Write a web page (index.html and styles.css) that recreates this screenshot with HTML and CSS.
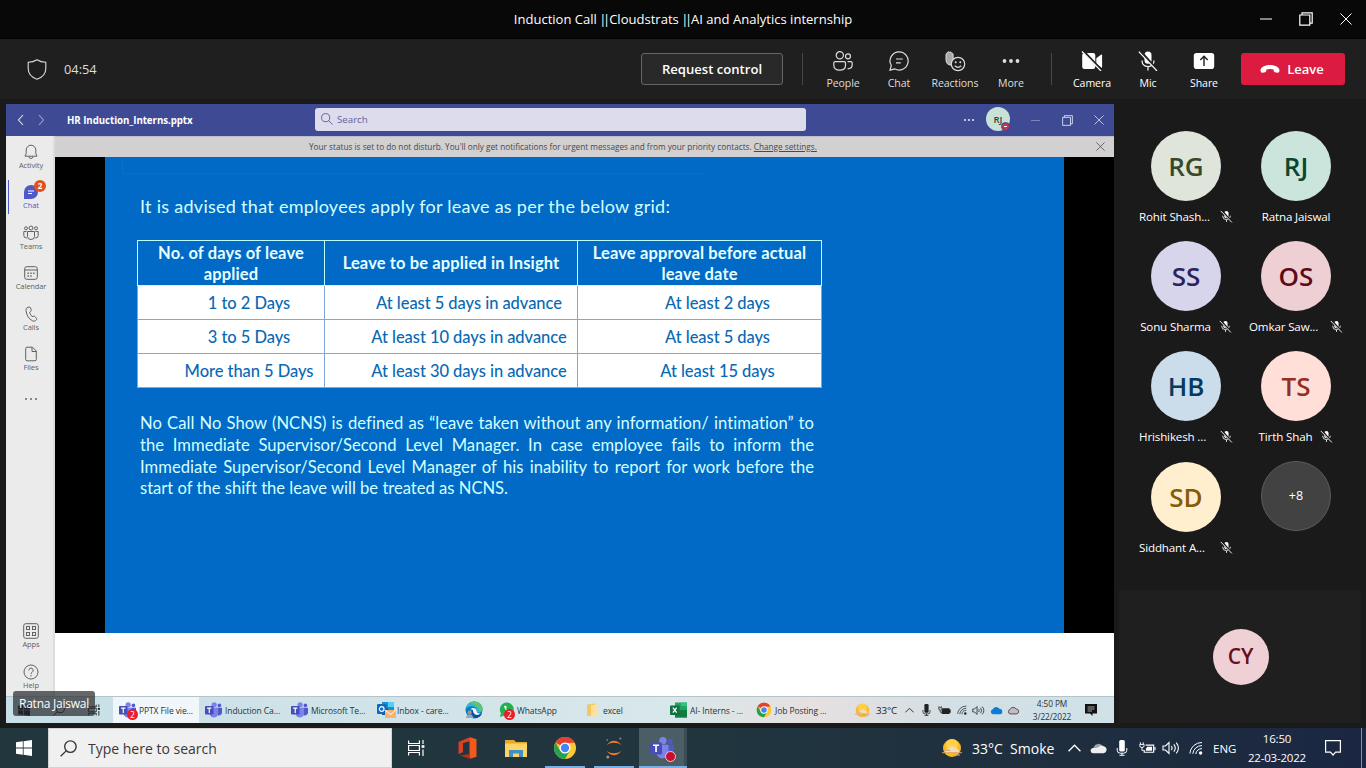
FILE: index.html
```html
<!DOCTYPE html>
<html lang="en">
<head>
<meta charset="utf-8">
<title>Induction Call ||Cloudstrats ||AI and Analytics internship</title>
<link rel="stylesheet" href="styles.css">
</head>
<body>
<svg class="defs" aria-hidden="true">
  <symbol id="muted" viewBox="0 0 14 14"><rect x="4.6" y="1" width="4.6" height="8" rx="2.3" fill="#fff"/><path d="M2.8 6.2a4.2 4.2 0 0 0 8.4 0M7 10.4v2.4" fill="none" stroke="#e8e8e8"/><path d="M1.6 0.4 13 13.4" stroke="#1a1a1a" stroke-width="2.2"/><path d="M.8 1 12.8 13.4" stroke="#fff"/></symbol>
  <symbol id="min" viewBox="0 0 12 12"><path d="M0 6h12" stroke="currentColor"/></symbol>
  <symbol id="restore" viewBox="0 0 14 14"><path d="M.8 3h10v10.2h-10zM3 3V.8h10.2v10.4h-2.4" fill="none" stroke="currentColor" stroke-width="1.2"/></symbol>
  <symbol id="close" viewBox="0 0 12 12"><path d="m.5.5 11 11m0-11-11 11" stroke="currentColor"/></symbol>
  <symbol id="teams" viewBox="0 0 26 24"><circle cx="14" cy="4" r="4" fill="#7b83eb"/><circle cx="22" cy="5" r="2.8" fill="#5059c9"/><path d="M17 8.5h9v7.2a5 5 0 0 1-7 4.2z" fill="#5059c9"/><path d="M7 8.5h13V17a6.5 6.5 0 0 1-13 0z" fill="#7b83eb"/><rect y="6" width="13" height="13" rx="1.2" fill="#464eb8"/><path d="M3.2 9h6.6M6.5 9v7.4" stroke="#fff" stroke-width="1.8"/></symbol>
  <symbol id="chrome" viewBox="0 0 48 48"><circle cx="24" cy="24" r="22" fill="#fbc934"/><path d="M24 24 5 13A22 22 0 0 1 43.1 13H24z" fill="#e34133"/><path d="M5 13A22 22 0 0 0 24 46l9.5-16.5L24 24l-9.5 5.5z" fill="#25a152"/><path d="M5 13a22 22 0 0 1 38-0L24 14z" fill="#e34133"/><circle cx="24" cy="24" r="11" fill="#fff"/><circle cx="24" cy="24" r="8.3" fill="#4285f4"/></symbol>
  <symbol id="weather" viewBox="0 0 22 20"><circle cx="11" cy="10" r="9" fill="#fbb924"/><circle cx="11" cy="7" r="6" fill="#ffd04a"/><path d="M4 14a3 3 0 0 1 3-3 4.3 4.3 0 0 1 7.8-.4A3 3 0 0 1 18 14z" fill="#f3dcb8"/><path d="M1 14.8h20M3 12.4h6M12 17h7" stroke="#d9a878" stroke-width="1.1"/></symbol>
  <symbol id="chev" viewBox="0 0 12 12"><path d="m.5 8.5 5.5-5.5 5.5 5.5" fill="none" stroke="currentColor" stroke-width="1.2"/></symbol>
  <symbol id="mic" viewBox="0 0 12 16"><rect x="3.2" y="0" width="5.6" height="11.5" rx="1.6" fill="currentColor"/><path d="M1.2 8v2.2q0 3 3 3h3.6q3 0 3-3V8M6 13v2.2M3.5 15.3h5" fill="none" stroke="currentColor"/></symbol>
  <symbol id="batt" viewBox="0 0 18 14"><path d="M7 4h8.5v7.5h-10V9" fill="none" stroke="currentColor" stroke-width="1.2"/><path d="M8.8 5.8h5v4h-6.5v-2zM16.3 6h1.2v3.5h-1.2z" fill="currentColor"/><path d="M1.5 1v2M4.5 1v2M.8 3.2h4.6v1.3q0 2-2.3 2t-2.3-2zM3.1 6.5v3h2" fill="none" stroke="currentColor"/></symbol>
  <symbol id="battfull" viewBox="0 0 18 14"><path d="M6 4h10v1.500h1.500v4.500H16v1.800H5V7q1-1 1-3z" fill="currentColor"/><path d="M1.500 1v2M4.500 1v2M.8 3.200h4.600v1.300q0 2-2.300 2t-2.300-2zM3.100 6.500v3h2" fill="none" stroke="currentColor"/></symbol>
  <symbol id="vol" viewBox="0 0 18 14"><path d="M1 5h2.5L7 1.5v11L3.5 9H1z" fill="none" stroke="currentColor" stroke-width="1.1"/><path d="M9.3 5q1.6 2 0 4M11.8 3.3q3 3.7 0 7.4M14.2 1.6q4.4 5.4 0 10.8" fill="none" stroke="currentColor" stroke-width="1.1"/></symbol>
  <symbol id="wifi" viewBox="0 0 14 14"><path d="M.8 12.5A12 12 0 0 1 13 1.5M3.8 12.8A9 9 0 0 1 13 4.6M6.8 13A6 6 0 0 1 13 7.6" fill="none" stroke="currentColor"/><circle cx="11.6" cy="12" r="1.7" fill="currentColor"/></symbol>
  <symbol id="cloud" viewBox="0 0 18 12"><path d="M4 11.3a3.6 3.6 0 0 1-.2-7A5.2 5.2 0 0 1 13 3.6a3.9 3.9 0 0 1 1 7.7z" fill="currentColor"/></symbol>
  <symbol id="win" viewBox="0 0 16 16"><path d="M0 2.3 6.8 1.3V7.6H0zM7.6 1.2 16 0v7.6H7.6zM0 8.4h6.8v6.3L0 13.7zM7.6 8.4H16V16l-8.4-1.2z" fill="currentColor"/></symbol>
  <symbol id="task" viewBox="0 0 18 16"><path d="M.6.5v3h10.8v-3M.6 15.5v-3h10.8v3M.6 5.5h10.8v5H.6zM15 0v4M15 9.5V16" fill="none" stroke="currentColor" stroke-width="1.2"/><path d="M13.6 5.2h2.8v2.6h-2.8z" fill="currentColor"/></symbol>
  <symbol id="lens" viewBox="0 0 16 16"><circle cx="9.8" cy="6.2" r="5.4" fill="none" stroke="currentColor" stroke-width="1.3"/><path d="m6 10-5.400 5.400" stroke="currentColor" stroke-width="1.300"/></symbol>
</svg>

<header class="titlebar">
  <h1>Induction Call <span class="pipes">||</span>Cloudstrats <span class="pipes">||</span>AI and Analytics internship</h1>
  <div class="wincontrols"><svg width="12" height="12"><use href="#min"/></svg><svg width="14" height="14"><use href="#restore"/></svg><svg width="12" height="12"><use href="#close"/></svg></div>
</header>

<nav class="callbar">
  <svg class="shield" width="20" height="21" viewBox="0 0 20 21"><path d="M10 .8Q13.800 3.300 18.800 3.300V9.500Q18.800 17.200 10 20.200 1.200 17.200 1.200 9.500V3.300Q6.200 3.300 10 .8Z" fill="none" stroke="#ddd" stroke-width="1.1"/></svg>
  <span class="timer">04:54</span>
  <button class="request">Request control</button>
  <i class="divider"></i>
  <div class="actions first">
    <div class="action"><svg width="20" height="20" viewBox="0 0 20 20"><g fill="none" stroke="currentColor" stroke-width="1.2"><circle cx="6.800" cy="4.300" r="3.600"/><circle cx="15" cy="5.300" r="2.500"/><path d="M2.200 10.600h8.900q1.400 0 1.400 1.400v2.300q0 4.900-5.800 4.900T.8 14.300V12q0-1.400 1.400-1.400zM14.500 10.600h3.400q1.300 0 1.300 1.400v1.800q0 4-4.600 4"/></g></svg><span>People</span></div>
    <div class="action"><svg width="20" height="20" viewBox="0 0 20 20"><path d="M10.200.8a9.100 9.100 0 1 1-4.300 17.200L1 19.200l1.300-4.700A9.100 9.100 0 0 1 10.200.8zM7 8h6.800M7 11.800h4.800" fill="none" stroke="currentColor" stroke-width="1.200"/></svg><span>Chat</span></div>
    <div class="action"><svg width="22" height="21" viewBox="0 0 22 21"><path d="M2 8V3.500q0-1.200 1.300-1.200V1.500Q4.500.2 5.600 1.200q1.600-.8 2 1 1.500-.3 1.500 1.300v5q1.300-1.500 2.600-.6L9 13.500q-3 1.500-5.500-.6Q1.800 11 2 8z" fill="#aaa" stroke="#ddd"/><circle cx="14" cy="13" r="6.700" fill="#1f1f1f" stroke="#ddd" stroke-width="1.200"/><circle cx="11.700" cy="11.300" r="1" fill="#ddd"/><circle cx="16.300" cy="11.300" r="1" fill="#ddd"/><path d="M10.800 14.800q3.200 3 6.400 0" fill="none" stroke="#ddd" stroke-width="1.200"/></svg><span>Reactions</span></div>
    <div class="action"><svg width="20" height="20" viewBox="0 0 20 20"><g fill="currentColor"><circle cx="3.500" cy="10" r="1.900"/><circle cx="10" cy="10" r="1.900"/><circle cx="16.500" cy="10" r="1.900"/></g></svg><span>More</span></div>
  </div>
  <i class="divider"></i>
  <div class="actions devices">
    <div class="action"><svg width="22" height="20" viewBox="0 0 22 20"><path d="M3.500 2H12q2.300 0 2.300 2.300v11.400Q14.300 18 12 18H3.500q-2.300 0-2.300-2.300V4.300Q1.200 2 3.500 2zM15.300 7.200 20.300 3.500q.8-.4.8.6v12q0 1-.8.5l-5-3.800z" fill="#fff"/><path d="M2.200 0 21 20" stroke="#1f1f1f" stroke-width="2.600"/><path d="M1 .5 20 20" stroke="#fff" stroke-width="1.200"/></svg><span>Camera</span></div>
    <div class="action"><svg width="20" height="20" viewBox="0 0 20 20"><rect x="6.500" y=".4" width="7" height="12.300" rx="3.500" fill="#fff"/><path d="M4 9.500q0 6 6 6t6-6M10 15.500v4" fill="none" stroke="#fff" stroke-width="1.200"/><path d="M2.200 0 20 20" stroke="#1f1f1f" stroke-width="2.600"/><path d="M.8.600 19 20" stroke="#fff" stroke-width="1.200"/></svg><span>Mic</span></div>
    <div class="action"><svg width="22" height="20" viewBox="0 0 22 20"><rect x=".8" y="2" width="20.400" height="16" rx="2.800" fill="#fff"/><path d="M11 15V5.500M7.300 9 11 5.300 14.700 9" fill="none" stroke="#1f1f1f" stroke-width="1.400"/></svg><span>Share</span></div>
  </div>
  <button class="leave"><svg width="20" height="10" viewBox="0 0 20 10"><path d="M10 1C4.500 1 .3 3.600.5 6.700q.1 2.300 2 2.100l2.600-.5Q6.300 8 6.300 6.700V5.400q3.700-1 7.400 0v1.300q0 1.300 1.200 1.600l2.600.5q1.900.2 2-2.100C19.700 3.600 15.500 1 10 1z" fill="#fff"/></svg>Leave</button>
</nav>

<main class="stage">
  <section class="shared">
    <div class="apphead">
      <svg class="nav" width="28" height="12" viewBox="0 0 28 12"><path d="M6 1 1.500 6 6 11" fill="none" stroke="#e4e4f4" stroke-width="1.100"/><path d="m22 1 4.500 5L22 11" fill="none" stroke="#9a9fd0" stroke-width="1.100"/></svg>
      <b class="filename">HR Induction_Interns.pptx</b>
      <div class="appsearch"><svg class="flip" width="12" height="12" viewBox="0 0 16 16"><use href="#lens"/></svg>Search</div>
      <span class="appdots"><i></i><i></i><i></i></span>
      <div class="me">RJ<i class="busy"></i></div>
      <svg class="w1" width="9" height="9"><use href="#min"/></svg>
      <svg class="w2" width="11" height="11"><use href="#restore"/></svg>
      <svg class="w3" width="10" height="10"><use href="#close"/></svg>
    </div>
    <div class="appbody">
      <aside class="rail">
        <div class="railitem"><svg width="14" height="16" viewBox="0 0 14 16"><path d="M1 12.200 2.200 9.500V6a4.800 4.800 0 0 1 9.600 0v3.500L13 12.200zM5 12.500q0 2 2 2t2-2" fill="none" stroke="currentColor"/></svg>Activity</div>
        <div class="railitem on"><svg width="16" height="16" viewBox="0 0 16 16"><path d="M8 1a7 7 0 0 1 0 14H1.500Q1 15 1 14.500V8a7 7 0 0 1 7-7z" fill="#5059c9"/><path d="M5 7h6M5 9.500h4" stroke="#fff"/></svg>Chat<b class="count">2</b></div>
        <div class="railitem"><svg width="16" height="15" viewBox="0 0 16 15"><g fill="none" stroke="currentColor"><circle cx="8" cy="2.500" r="2"/><circle cx="3" cy="2.800" r="1.500"/><circle cx="13" cy="2.800" r="1.500"/><path d="M4.500 6h7v5q0 3-3.500 3t-3.500-3zM3.500 6H.8v4q0 2.500 3 2.500M12.500 6h2.700v4q0 2.500-3 2.500"/></g></svg>Teams</div>
        <div class="railitem"><svg width="14" height="14" viewBox="0 0 14 14"><rect x=".7" y=".7" width="12.600" height="12.600" rx="2" fill="none" stroke="currentColor"/><path d="M.7 4h12.600" stroke="currentColor"/><path d="M3.500 7.200h8M3.500 10h5.500" stroke="currentColor" stroke-width="1.400" stroke-dasharray="1.400 1.400"/></svg>Calendar</div>
        <div class="railitem"><svg width="13" height="16" viewBox="0 0 13 16"><path d="M2 1.700 4 1q1-.2 1.400.7l.8 2q.3.900-.4 1.500L4.600 6.300q.7 2.500 2.500 4.300l1.600-.4q.8-.2 1.300.4l1.500 1.800q.5.700-.1 1.400l-1 .9q-1 .9-2.700.2Q1.800 12 1 4.500.8 2.500 2 1.700z" fill="none" stroke="currentColor"/></svg>Calls</div>
        <div class="railitem"><svg width="12" height="15" viewBox="0 0 12 15"><path d="M2 .7h5.500L11.300 4.500V13q0 1.300-1.300 1.300H2Q.7 14.300.7 13V2Q.7.7 2 .7zM7 .8V5h4.200" fill="none" stroke="currentColor"/></svg>Files</div>
        <span class="raildots"><i></i><i></i><i></i></span>
        <i class="railline"></i>
        <div class="railitem apps"><svg width="16" height="16" viewBox="0 0 16 16"><g fill="none" stroke="currentColor"><rect x=".7" y=".7" width="14.600" height="14.600" rx="2"/><rect x="3.500" y="3.500" width="3" height="3"/><rect x="9.500" y="3.500" width="3" height="3"/><rect x="3.500" y="9.500" width="3" height="3"/><rect x="9.500" y="9.500" width="3" height="3"/></g></svg>Apps</div>
        <div class="railitem"><svg width="16" height="16" viewBox="0 0 16 16"><g fill="none" stroke="currentColor"><circle cx="8" cy="8" r="7"/><path d="M5.800 6.300a2.200 2.200 0 1 1 3.500 1.800Q8 8.800 8 10M8 11v1.400"/></g></svg>Help</div>
      </aside>
      <div class="viewer">
        <div class="banner"><p>Your status is set to do not disturb. You'll only get notifications for urgent messages and from your priority contacts. <u>Change settings.</u></p><svg width="9" height="9"><use href="#close"/></svg></div>
        <div class="letterbox">
          <article class="slide">
            <div class="outline"></div>
            <p class="intro">It is advised that employees apply for leave as per the below grid:</p>
            <table>
              <colgroup><col class="c1"><col class="c2"><col class="c3"></colgroup>
              <thead><tr><th>No. of days of leave<br>applied</th><th>Leave to be applied in Insight</th><th>Leave approval before actual<br>leave date</th></tr></thead>
              <tbody>
                <tr><td>1 to 2 Days</td><td>At least 5 days in advance</td><td>At least 2 days</td></tr>
                <tr><td>3 to 5 Days</td><td>At least 10 days in advance</td><td>At least 5 days</td></tr>
                <tr><td>More than 5 Days</td><td>At least 30 days in advance</td><td>At least 15 days</td></tr>
              </tbody>
            </table>
            <div class="policy"><p>No Call No Show (NCNS) is defined as “leave taken without any information/ intimation” to</p><p>the Immediate Supervisor/Second Level Manager. In case employee fails to inform the</p><p>Immediate Supervisor/Second Level Manager of his inability to report for work before the</p><p class="last">start of the shift the leave will be treated as NCNS.</p></div>
          </article>
        </div>
        <div class="blank"></div>
      </div>
    </div>
    <div class="rbar">
      <div class="rsys"><svg width="12" height="12" viewBox="0 0 16 16"><use href="#win"/></svg><svg width="12" height="12" viewBox="0 0 16 16"><use href="#lens"/></svg><svg width="13" height="12" viewBox="0 0 18 16"><use href="#task"/></svg></div>
      <div class="rtask sel"><svg width="17" height="16"><use href="#teams"/></svg><i class="dot">2</i><span>PPTX File vie...</span></div>
      <div class="rtask"><svg width="17" height="16"><use href="#teams"/></svg><span>Induction Ca...</span></div>
      <div class="rtask"><svg width="17" height="16"><use href="#teams"/></svg><span>Microsoft Te...</span></div>
      <div class="rtask inbox"><svg width="19" height="18" viewBox="0 0 19 18"><path d="M5 1h12v13H5z" fill="#1490df"/><path d="M11 1h6v5h-6z" fill="#50d0f5"/><path d="M5 7h6v7H5z" fill="#0a5aa8"/><rect y="3" width="9.500" height="10" rx="1" fill="#0f6cbd"/><circle cx="4.700" cy="8" r="2.300" fill="none" stroke="#fff" stroke-width="1.200"/><path d="M8 9h11v8H8z" fill="#f7b56c"/><path d="m8 9 5.500 4.500L19 9" fill="none" stroke="#fff"/></svg><span>Inbox - care...</span></div>
      <div class="rtask edge"><svg width="18" height="18" viewBox="0 0 18 18"><circle cx="9" cy="9" r="8.500" fill="#0f79c8"/><path d="M.5 8.500C1.500 3.500 5 .5 9 .5c5 0 8.500 3.500 8.500 7 0 3-2.500 4.500-4.500 4-2-.4-1.500-1.700-1.500-2.500C11.500 4.500 4 3.500.5 8.500z" fill="#35b8c8"/><path d="M8 .6c6-.6 9.500 3.400 9.500 7 0 2-1.500 3.500-3 3.900C15 7 12 4 5 2z" fill="#5fc56e"/><path d="M17 12.500c-3 2.500-8.500 1-9-3.500-2 2-1.500 6.500 3 8.200 3-.5 5-2.200 6-4.700z" fill="#0b4d9a"/><path d="M11.500 10C11.500 6.500 7 6 5 8.500q2-.5 3 .8-.3 2 1.500 3.700 3 2 6-.5-3.500.300-4-2.500z" fill="#eef6fb"/><circle cx="4.500" cy="11.500" r="2" fill="#b78c80"/><path d="M1 17q0-3.500 3.500-3.500T8 17z" fill="#98a6b8"/></svg></div>
      <div class="rtask wa"><svg width="16" height="16" viewBox="0 0 16 16"><path d="M8 .5a7 7 0 1 1-3.300 13.300L.8 15l1.200-3.700A7 7 0 0 1 8 .5z" fill="#25b050"/><path d="M5 4q1 5 6 7l1.200-2-2-1-1 .8Q7.500 8 7 6.500l.8-.8-.7-1.900z" fill="#fff"/></svg><i class="dot">2</i><span>WhatsApp</span></div>
      <div class="rtask folder"><svg width="12" height="14" viewBox="0 0 12 14"><path d="M1 1.500 9 .5v12l-8 .5z" fill="#f2c866"/><path d="M5 2h6v11l-6 .8z" fill="#ffe09a"/></svg><span>excel</span></div>
      <div class="rtask xls"><svg width="17" height="16" viewBox="0 0 17 16"><path d="M5 .5h12v15H5z" fill="#21a366"/><path d="M5 8h12v7.500H5z" fill="#107c41"/><path d="M11 .5h6V4h-6z" fill="#33c481"/><rect y="3.500" width="9.500" height="9.500" rx=".8" fill="#0f703b"/><path d="m2.900 5.700 3.800 5m0-5-3.800 5" stroke="#fff" stroke-width="1.300"/></svg><span>AI- Interns - ...</span></div>
      <div class="rtask jobs"><svg width="16" height="16"><use href="#chrome"/></svg><span>Job Posting ...</span></div>
      <div class="rtray"><svg class="a" width="17" height="15"><use href="#weather"/></svg><span class="temp">33°C</span><svg class="b" width="9" height="9"><use href="#chev"/></svg><svg class="c" width="9" height="12"><use href="#mic"/></svg><svg class="d" width="13" height="11"><use href="#battfull"/></svg><svg class="e" width="10" height="10"><use href="#wifi"/></svg><svg class="f" width="13" height="11"><use href="#vol"/></svg><svg class="g" width="13" height="9"><use href="#cloud"/></svg><svg class="h" width="13" height="9" viewBox="-1 -1 20 14"><path d="M4 11.300a3.600 3.600 0 0 1-.2-7A5.200 5.200 0 0 1 13 3.600a3.900 3.900 0 0 1 1 7.700z" fill="#c8b9c2" stroke="#504b52" stroke-width="1.500"/></svg></div>
      <div class="rclock">4:50 PM<br>3/22/2022</div>
      <svg class="rnote" width="12" height="12" viewBox="0 0 12 12"><path d="M0 0h12v9.500H7.500V12L5 9.500H0z" fill="#111"/><path d="M2.500 3h7M2.500 5h7M2.500 7H7" stroke="#ccc" stroke-width=".8"/></svg>
    </div>
    <div class="presenter">Ratna Jaiswal</div>
  </section>

  <aside class="people">
    <div class="grid">
      <div class="person"><div class="face rg">RG</div><div class="name"><span class="cut">Rohit Shash...</span><svg><use href="#muted"/></svg></div></div>
      <div class="person"><div class="face rj">RJ</div><div class="name"><span>Ratna Jaiswal</span></div></div>
      <div class="person"><div class="face ss">SS</div><div class="name"><span class="full">Sonu Sharma</span><svg><use href="#muted"/></svg></div></div>
      <div class="person"><div class="face os">OS</div><div class="name"><span class="cut">Omkar Saw...</span><svg><use href="#muted"/></svg></div></div>
      <div class="person"><div class="face hb">HB</div><div class="name"><span class="cut">Hrishikesh ...</span><svg><use href="#muted"/></svg></div></div>
      <div class="person"><div class="face ts">TS</div><div class="name"><span class="full">Tirth Shah</span><svg><use href="#muted"/></svg></div></div>
      <div class="person low"><div class="face sd">SD</div><div class="name"><span class="cut">Siddhant A...</span><svg><use href="#muted"/></svg></div></div>
      <div class="person"><div class="face more">+8</div></div>
    </div>
    <div class="self"><div class="face cy">CY</div></div>
  </aside>
</main>

<footer class="taskbar">
  <div class="start"><svg width="16" height="16"><use href="#win"/></svg></div>
  <div class="search"><svg width="17" height="17" viewBox="0 0 16 16"><use href="#lens"/></svg>Type here to search</div>
  <div class="tb"><svg width="18" height="16"><use href="#task"/></svg></div>
  <div class="tb office"><svg width="19" height="22" viewBox="0 0 19 22"><path d="M12 .3 18.500 2.300v17.400L12 21.700z" fill="#f05a1c"/><path d="M12 .3v21.400L2 18.500l9-1.200V4.500L5 6v9L.7 17V5z" fill="#c22a1c"/><path d="M.7 5 12 .3V4L5 6v9L.7 17z" fill="#d94324"/></svg></div>
  <div class="tb files"><svg width="22" height="19" viewBox="0 0 22 19"><path d="M0 1h9l2 2h11v15H0z" fill="#e5a82d"/><path d="M0 4.500h22V18H0z" fill="#fdd565"/><path d="M4 18v-7h14v7h-4v-3.500H8V18z" fill="#3f8fca"/></svg></div>
  <div class="tb gc run"><svg width="24" height="24"><use href="#chrome"/></svg></div>
  <div class="tb jup run"><svg width="18" height="22" viewBox="0 0 18 22"><path d="M1.500 8Q9-.5 16.500 8 9 3.500 1.500 8zM1.500 14Q9 22.500 16.500 14 9 18.500 1.500 14z" fill="#f37726"/><circle cx="2.200" cy="3" r=".9" fill="#777"/><circle cx="15.300" cy="1.500" r="1.100" fill="#888"/><circle cx="2.800" cy="20" r="1.500" fill="#999"/></svg></div>
  <div class="tb tm run"><svg width="24" height="22"><use href="#teams"/></svg><i class="rec"></i></div>
  <div class="tray"><svg class="t1" width="22" height="20"><use href="#weather"/></svg><span class="wx">33°C&nbsp; Smoke</span><svg class="t2" width="13" height="13"><use href="#chev"/></svg><svg class="t3" width="17" height="12" viewBox="0 0 18 12"><path d="M4 9a3.600 3.600 0 0 1 0-4A5.200 5.200 0 0 1 13 3.600z" fill="#9fa4ac"/><path d="M3.500 11.500a2.800 2.800 0 0 1 0-5.600Q7 6.500 9 5q3-3 6-.5 3 1 2.500 4-.5 2.500-3 3z" fill="#eee"/></svg><svg class="t4" width="12" height="16"><use href="#mic"/></svg><svg class="t5" width="17" height="14"><use href="#batt"/></svg><svg class="t6" width="18" height="14"><use href="#vol"/></svg><svg class="t7" width="14" height="14"><use href="#wifi"/></svg><span class="lang">ENG</span></div>
  <div class="clock">16:50<br>22-03-2022</div>
  <svg class="note" width="16" height="16" viewBox="0 0 16 16"><path d="M.6.6h14.800v11.600h-4.800L8 15l-2.600-2.800H.6z" fill="none" stroke="#fff" stroke-width="1.200"/></svg>
  <i class="peek"></i>
</footer>
</body>
</html>
```
FILE: styles.css
```css
* { box-sizing: border-box; margin: 0; padding: 0; }
body { width: 1366px; height: 768px; overflow: hidden; background: #1a1a1a; color: #fff; font-family: "Open Sans", "Noto Sans", sans-serif; display: flex; flex-direction: column; }
svg { display: block; flex: none; }
i, u { font-style: normal; }
button { font: inherit; color: inherit; border: 0; }
.defs { position: absolute; width: 0; height: 0; }
.titlebar { height: 39px; flex: none; background: #080808; border-bottom: 1px solid #000; display: flex; align-items: center; justify-content: center; position: relative; }
h1 { font-size: 13.050px; font-weight: 400; letter-spacing: 0; white-space: nowrap; }
.pipes { letter-spacing: -3.500px; margin: 0 2.500px 0 -1px; }
.wincontrols { position: absolute; right: 14px; top: 12px; display: flex; gap: 27px; align-items: center; }
.callbar { height: 60px; flex: none; background: #1f1f1f; display: flex; align-items: center; padding-left: 27px; }
.timer { font-size: 12.800px; color: #ddd; margin-left: 17px; width: 577px; }
.request { width: 142px; height: 32px; background: #292929; border: 1px solid #666; border-radius: 3px; font-size: 13.100px; font-weight: 600; white-space: nowrap; }
.divider { width: 1px; height: 32px; background: #484848; margin-left: 19px; }
.actions { display: flex; }
.actions.first { margin-left: 12px; color: #ddd; }
.devices { margin-left: 12px; }
.actions + .divider { margin-left: 12px; }
.action { width: 56px; height: 39px; display: flex; flex-direction: column; align-items: center; justify-content: space-between; font-size: 10.600px; letter-spacing: -0.1px; line-height: 14px; margin-top: 2px; }
.leave { width: 104px; height: 32px; margin-left: 9px; background: #dc1b40; border-radius: 3px; font-size: 13px; font-weight: 600; display: flex; align-items: center; justify-content: center; gap: 7px; padding-right: 2px; }
.stage { height: 629px; flex: none; display: flex; padding: 5px 0 5px 6px; }
.shared { width: 1108px; height: 619px; display: flex; flex-direction: column; position: relative; }
.apphead { height: 32px; flex: none; background: #3f4a94; display: flex; align-items: center; }
.nav { margin-left: 10px; width: 30px; }
.filename { font-size: 9.700px; margin-left: 21px; width: 248px; letter-spacing: -0.05px; }
.appsearch { width: 491px; height: 23px; border-radius: 3px; background: #dddcec; color: #5e6298; font-size: 9.700px; display: flex; align-items: center; padding-left: 6px; gap: 4px; margin-bottom: 2px; }
.flip { transform: scaleX(-1); }
.appdots { display: flex; gap: 2px; width: 10px; margin-left: 158px; }
.appdots i, .raildots i { width: 2px; height: 2px; border-radius: 50%; background: #eee; }
.me { width: 24px; height: 24px; border-radius: 50%; background: #c9e2d8; color: #1c4a3b; font-size: 9.500px; font-weight: 600; display: flex; align-items: center; justify-content: center; position: relative; margin-left: 12px; margin-bottom: 2px; }
.busy { position: absolute; right: 0; bottom: 0; width: 9px; height: 9px; border-radius: 50%; background: #d32f4a; border: 1px solid #3f4a94; }
.busy::after { content: ""; position: absolute; left: 2px; top: 3px; width: 3px; height: 1px; background: #fff; }
.apphead .w1 { margin-left: 21px; color: #9298c8; }
.w2 { margin-left: 22px; color: #d6d8ee; }
.w3 { margin-left: 21px; color: #d6d8ee; }
.appbody { height: 560px; flex: none; display: flex; }
.rail { width: 49px; padding-top: 1px; background: #ebebeb; color: #616161; box-shadow: inset -2px 0 1px #dcdcdc; display: flex; flex-direction: column; align-items: center; }
.railitem { width: 49px; height: 40.400px; flex: none; display: flex; flex-direction: column; align-items: center; font-size: 7.500px; letter-spacing: -0.1px; line-height: 9px; padding: 7px 0 0 1px; position: relative; }
.railitem svg { height: 16px; margin-bottom: 1px; }
.railitem.on { color: #5059c9; }
.railitem.on::before { content: ""; position: absolute; left: 2px; top: 3px; width: 1px; height: 34px; background: #5059c9; }
.count { position: absolute; left: 28px; top: 3px; width: 12px; height: 12px; border-radius: 50%; background: #e2501f; color: #fff; font-size: 8px; line-height: 12px; text-align: center; }
.raildots { display: flex; gap: 3px; margin: 19px 0 0 1px; }
.raildots i { background: #666; }
.railline { width: 19px; height: 1px; background: #ccc; margin-top: 22px; }
.railitem.apps { margin-top: 194px; }
.viewer { width: 1059px; display: flex; flex-direction: column; }
.banner { height: 21px; flex: none; background: #d2d0d1; border-top: 1px solid #bdbcca; color: #484848; font-size: 8.220px; display: flex; align-items: center; padding: 0 0 2px 254px; }
.banner p { width: 787px; white-space: nowrap; }
.letterbox { height: 476px; flex: none; background: #000; display: flex; justify-content: center; }
.slide { width: 959px; background: #006ac6; font-family: Lato, "Open Sans", sans-serif; color: #d5ffff; padding-left: 35px; }
.outline { width: 581px; height: 17px; margin-left: -18px; border: solid #0871c6; border-width: 0 0 1px 1px; }
.intro { font-size: 18px; line-height: 22px; margin-top: 21px; white-space: nowrap; letter-spacing: 0.280px; }
table { width: 684px; margin: 23px 0 0 -3px; border-collapse: collapse; table-layout: fixed; font-size: 16.500px; line-height: 21.500px; }
.c1 { width: 187px; } .c2 { width: 253px; } .c3 { width: 244px; }
th { height: 44px; font-weight: 700; border: 1px solid #bfffff; text-align: center; white-space: nowrap; color: #e6ffff; letter-spacing: 0.130px; }
th:nth-child(2) { padding-top: 2px; }
th:nth-child(odd) { line-height: 21px; padding-top: 2px; }
td { height: 34px; background: #fff; border: 1px solid #80a8dd; color: #0869b4; text-align: center; padding: 2px 0 0 36px; font-weight: 500; letter-spacing: -0.050px; white-space: nowrap; }
.policy { width: 674px; margin-top: 25px; font-size: 16.600px; line-height: 21.800px; }
.policy p { text-align-last: justify; white-space: nowrap; letter-spacing: 0.030px; }
.policy .last { width: 368px; letter-spacing: -0.020px; }
.blank { flex: 1; background: #fff; }
.rbar { height: 27px; flex: none; border-top: 1px solid #b4c4ca; background: linear-gradient(90deg, #c8dfe7 0, #d8e7ea 60%, #e6e0e0 73%, #d3dfe4 85%, #cfe2e8); color: #29343a; display: flex; align-items: center; font-size: 8.500px; letter-spacing: -0.1px; position: relative; }
.rsys { width: 107px; display: flex; gap: 23px; padding-left: 12px; color: #111; }
.rtask { width: 86px; height: 26px; flex: none; display: flex; align-items: center; gap: 3px; padding-left: 6px; position: relative; white-space: nowrap; }
.sel { background: #f0f6fa; }
.dot { position: absolute; left: 14px; top: 12px; width: 11px; height: 11px; border-radius: 50%; background: #e81f2d; color: #fff; font-size: 8.500px; line-height: 11px; text-align: center; }
.inbox { padding-left: 6px; gap: 1px; }
.edge { padding-left: 8px; width: 35px; }
.wa { padding-left: 7px; gap: 2px; }
.wa .dot { left: 12px; }
.folder { padding-left: 8px; gap: 5px; }
.xls { padding-left: 6px; }
.jobs { width: 93px; }
.rtray { display: flex; align-items: center; color: #222; width: 172px; flex: none; margin-left: 5px; }
.rtray .a { margin-left: 6px; }
.rtray .temp { width: 36px; margin-left: 5px; font-size: 9.800px; }
.b { margin-left: 6px; } .c { margin-left: 8px; } .d { margin-left: 7px; } .e { margin-left: 6px; } .f { margin-left: 5px; }
.g { margin-left: 5px; color: #0f7bd8; } .h { margin-left: 4px; }
.rclock { font-size: 8.300px; line-height: 13px; text-align: center; width: 52px; margin-left: 6px; }
.rnote { margin-left: 7px; }
.presenter { position: absolute; left: 7px; top: 587px; width: 82px; height: 25px; border-radius: 3px; background: rgba(42, 45, 48, .72); font-size: 12px; line-height: 25px; text-align: center; letter-spacing: -0.25px; white-space: nowrap; }
.people { width: 252px; padding-left: 5px; display: flex; flex-direction: column; }
.grid { height: 486px; padding: 27px 0 0 12px; display: grid; grid-template-columns: 110px 110px; grid-auto-rows: 110px; align-content: start; }
.person { display: flex; flex-direction: column; align-items: center; }
.low { padding-top: 1px; }
.face { width: 70px; height: 70px; flex: none; border-radius: 50%; display: flex; align-items: center; justify-content: center; font-size: 26px; font-weight: 600; padding-bottom: 1px; }
.rg { background: #dfe5da; color: #354a2a; } .rj { background: #cbe5dc; color: #08472f; }
.ss { background: #d7d5eb; color: #2a2360; } .os { background: #eed0d4; color: #5d0a1a; }
.hb { background: #cbdcea; color: #053a61; } .ts { background: #ffdfd8; color: #932f24; }
.sd { background: #ffefcf; color: #855c09; } .more { background: #424242; border: 1px solid #5c5c5c; font-size: 12.500px; font-weight: 400; }
.name { display: flex; align-items: center; justify-content: center; height: 18px; margin-top: 6px; font-size: 11.600px; letter-spacing: -0.15px; white-space: nowrap; }
.name svg { width: 13px; height: 13px; }
.cut { width: 81px; } .full { margin-right: 8px; }
.self { width: 242px; height: 133px; background: #1f1f1f; display: flex; align-items: center; justify-content: center; padding-left: 1px; }
.cy { width: 56px; height: 56px; font-size: 21px; background: #efd0d5; color: #66101e; }
.taskbar { height: 40px; flex: none; display: flex; align-items: center; background: linear-gradient(90deg, #21373d 0, #20353e 52%, #1f2f3e 75%, #1b2742 100%); }
.start { width: 48px; display: flex; justify-content: center; }
.search { width: 344px; height: 40px; background: #f0f0f0; border: 1px solid #d3d3d3; color: #383838; font-size: 14px; display: flex; align-items: center; gap: 11px; padding-left: 11px; }
.tb { width: 49px; height: 40px; flex: none; display: flex; align-items: center; justify-content: center; position: relative; }
.office { margin-left: 2px; } .files { margin-left: -1px; }
.run::after { content: ""; position: absolute; left: 5px; right: 4px; bottom: 0; height: 2px; background: #78b0e5; }
.gc { width: 49px; }
.tm { width: 48px; margin-left: 1px; background: #4b5e65; border-right: 3px solid #3b4c54; }
.tm::after { left: 0; right: -3px; }
.rec { position: absolute; left: 26px; top: 23px; width: 11px; height: 11px; border-radius: 50%; background: #c8102e; border: 1px solid #e6c8d0; }
.tray { margin-left: 254px; width: 304px; flex: none; display: flex; align-items: center; font-size: 14px; white-space: nowrap; }
.wx { width: 87px; margin-left: 9px; }
.t2 { margin-left: 9px; } .t3 { margin-left: 9px; } .t4 { margin-left: 9px; } .t5 { margin-left: 11px; } .t6 { margin-left: 6px; } .t7 { margin-left: 9px; }
.lang { font-size: 11.500px; margin-left: 10px; }
.clock { width: 64px; font-size: 11.500px; line-height: 19px; text-align: center; flex: none; letter-spacing: -0.2px; }
.note { margin-left: 16px; }
.peek { width: 1px; height: 40px; background: #8290a4; margin-left: 20px; }
```
